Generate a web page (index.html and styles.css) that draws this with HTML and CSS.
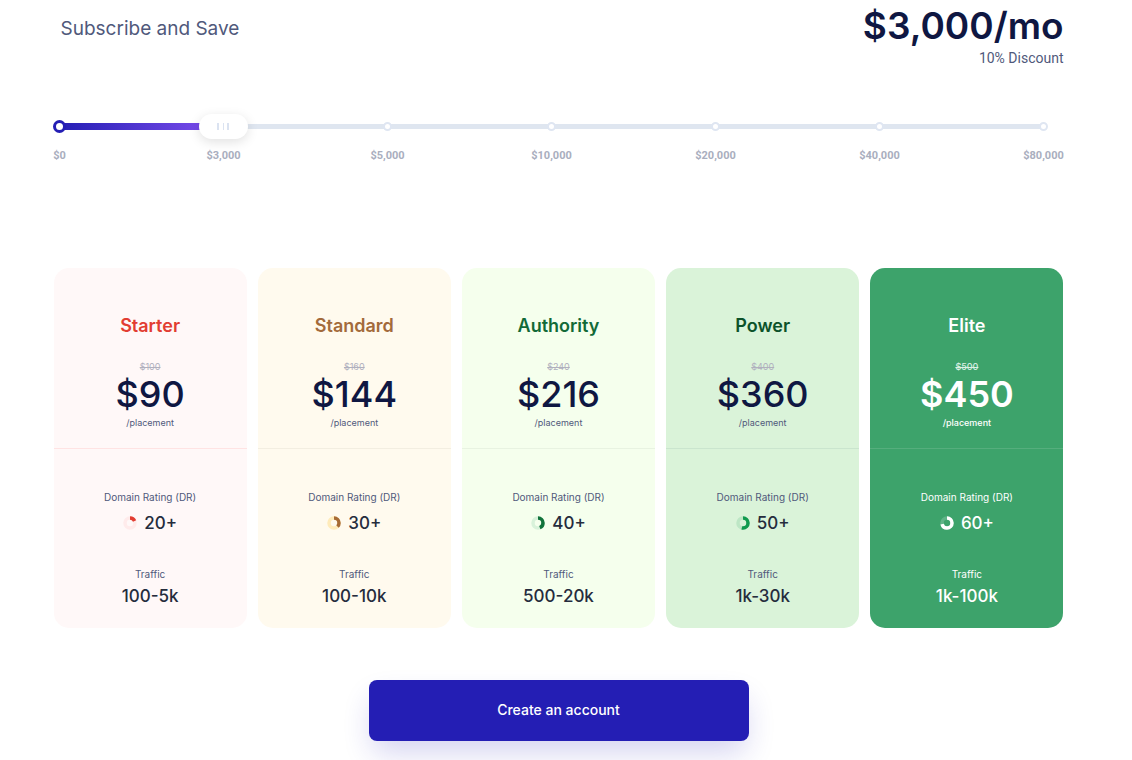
FILE: index.html
```html
<!DOCTYPE html>
<html lang="en">
<head>
<meta charset="utf-8">
<meta name="viewport" content="width=device-width, initial-scale=1">
<title>Pricing</title>
<link rel="stylesheet" href="styles.css">
</head>
<body>
<main class="page">
  <header class="summary">
    <label class="summary-title" for="budget">Subscribe and Save</label>
    <div class="summary-price">
      <output class="amount" for="budget">$3,000/mo</output>
      <span class="discount">10% Discount</span>
    </div>
  </header>

  <div class="slider">
    <div class="rail"><div class="fill"></div></div>
    <ol class="stops">
      <li class="stop stop-active"><span class="dot"></span><span class="stop-label">$0</span></li>
      <li class="stop"><span class="dot"></span><span class="stop-label">$3,000</span></li>
      <li class="stop"><span class="dot"></span><span class="stop-label">$5,000</span></li>
      <li class="stop"><span class="dot"></span><span class="stop-label">$10,000</span></li>
      <li class="stop"><span class="dot"></span><span class="stop-label">$20,000</span></li>
      <li class="stop"><span class="dot"></span><span class="stop-label">$40,000</span></li>
      <li class="stop"><span class="dot"></span><span class="stop-label">$80,000</span></li>
    </ol>
    <input class="range" id="budget" type="range" min="0" max="6" step="1" value="1">
  </div>

  <section class="plans">
    <article class="plan starter">
      <div class="plan-head">
        <h2 class="plan-name">Starter</h2>
        <s class="old-price">$100</s>
        <strong class="price">$90</strong>
        <span class="unit">/placement</span>
      </div>
      <dl class="plan-body">
        <dt class="term">Domain Rating (DR)</dt>
        <dd class="value rating"><svg class="ring" viewBox="0 0 28 28"><circle class="ring-base" cx="14" cy="14" r="10"/><circle class="ring-part" cx="14" cy="14" r="10" pathLength="100" stroke-dasharray="18 100"/></svg>20+</dd>
        <dt class="term">Traffic</dt>
        <dd class="value">100-5k</dd>
      </dl>
    </article>
    <article class="plan standard">
      <div class="plan-head">
        <h2 class="plan-name">Standard</h2>
        <s class="old-price">$160</s>
        <strong class="price">$144</strong>
        <span class="unit">/placement</span>
      </div>
      <dl class="plan-body">
        <dt class="term">Domain Rating (DR)</dt>
        <dd class="value rating"><svg class="ring" viewBox="0 0 28 28"><circle class="ring-base" cx="14" cy="14" r="10"/><circle class="ring-part" cx="14" cy="14" r="10" pathLength="100" stroke-dasharray="37 100"/></svg>30+</dd>
        <dt class="term">Traffic</dt>
        <dd class="value">100-10k</dd>
      </dl>
    </article>
    <article class="plan authority">
      <div class="plan-head">
        <h2 class="plan-name">Authority</h2>
        <s class="old-price">$240</s>
        <strong class="price">$216</strong>
        <span class="unit">/placement</span>
      </div>
      <dl class="plan-body">
        <dt class="term">Domain Rating (DR)</dt>
        <dd class="value rating"><svg class="ring" viewBox="0 0 28 28"><circle class="ring-base" cx="14" cy="14" r="10"/><circle class="ring-part" cx="14" cy="14" r="10" pathLength="100" stroke-dasharray="43 100"/></svg>40+</dd>
        <dt class="term">Traffic</dt>
        <dd class="value">500-20k</dd>
      </dl>
    </article>
    <article class="plan power">
      <div class="plan-head">
        <h2 class="plan-name">Power</h2>
        <s class="old-price">$400</s>
        <strong class="price">$360</strong>
        <span class="unit">/placement</span>
      </div>
      <dl class="plan-body">
        <dt class="term">Domain Rating (DR)</dt>
        <dd class="value rating"><svg class="ring" viewBox="0 0 28 28"><circle class="ring-base" cx="14" cy="14" r="10"/><circle class="ring-part" cx="14" cy="14" r="10" pathLength="100" stroke-dasharray="53 100"/></svg>50+</dd>
        <dt class="term">Traffic</dt>
        <dd class="value">1k-30k</dd>
      </dl>
    </article>
    <article class="plan elite">
      <div class="plan-head">
        <h2 class="plan-name">Elite</h2>
        <s class="old-price">$500</s>
        <strong class="price">$450</strong>
        <span class="unit">/placement</span>
      </div>
      <dl class="plan-body">
        <dt class="term">Domain Rating (DR)</dt>
        <dd class="value rating"><svg class="ring" viewBox="0 0 28 28"><circle class="ring-base" cx="14" cy="14" r="10"/><circle class="ring-part" cx="14" cy="14" r="10" pathLength="100" stroke-dasharray="70 100"/></svg>60+</dd>
        <dt class="term">Traffic</dt>
        <dd class="value">1k-100k</dd>
      </dl>
    </article>
  </section>

  <button class="cta" type="button">Create an account</button>
</main>
</body>
</html>
```
FILE: styles.css
```css
* { box-sizing: border-box; }

body {
  margin: 0;
  padding-right: 15px;
  background: #fff;
  color: #0f1742;
  font-family: Inter, "Liberation Sans", sans-serif;
}

.page {
  display: flex;
  flex-direction: column;
  max-width: 1010px;
  margin: 0 auto;
  padding: 4px 0 19px;
}

.summary {
  display: flex;
  justify-content: space-between;
  align-items: flex-start;
  padding-left: 7px;
}

.summary-title {
  padding-top: 13px;
  color: #50597b;
  font-size: 19px;
  line-height: 24px;
}

.summary-price {
  display: flex;
  flex-direction: column;
  align-items: flex-end;
}

.amount {
  font-size: 37px;
  font-weight: 600;
  line-height: 44px;
}

.discount {
  color: #50597b;
  font-family: Roboto, sans-serif;
  font-size: 14px;
  line-height: 20px;
}

.slider {
  display: grid;
  margin: 40px 14px 0 0;
}

.rail,
.stops,
.range { grid-area: 1 / 1; }

.rail {
  height: 5px;
  margin: 16px 6px 0;
  background: #dfe6f0;
}

.fill {
  width: 16.66%;
  height: 7px;
  margin-top: -1px;
  background: linear-gradient(90deg, #241eb4, #8150f0);
}

.stops {
  display: flex;
  justify-content: space-between;
  margin: 0;
  padding: 12px 0 0;
  list-style: none;
}

.stop {
  display: flex;
  flex-direction: column;
  align-items: center;
  gap: 16px;
  width: 12px;
}

.dot {
  width: 9px;
  height: 9px;
  margin: 2px 0;
  border: 2px solid #dfe6f2;
  border-radius: 50%;
  background: #fff;
}

.stop-active .dot {
  width: 13px;
  height: 13px;
  margin: 0;
  border: 3px solid #241eb4;
}

.stop-label {
  color: #a9aebe;
  font-family: Roboto, sans-serif;
  font-size: 11px;
  font-weight: 700;
  line-height: 13px;
  white-space: nowrap;
}

.range {
  appearance: none;
  height: 37px;
  margin: 0 -19px;
  background: transparent;
}

.range::-webkit-slider-thumb {
  appearance: none;
  width: 49px;
  height: 25px;
  border: 0;
  border-radius: 13px;
  background:
    linear-gradient(#dbe3f1, #dbe3f1) 18px 9px / 2px 7px no-repeat,
    linear-gradient(#dbe3f1, #dbe3f1) 24px 9px / 1px 7px no-repeat,
    linear-gradient(#dbe3f1, #dbe3f1) 28px 9px / 2px 7px no-repeat,
    #fff;
  box-shadow: 0 3px 12px rgba(0, 0, 0, 0.12);
}

.plans {
  display: grid;
  grid-template-columns: repeat(5, 1fr);
  gap: 11px;
  margin-top: 106px;
}

.plan {
  border-radius: 15px;
  background: var(--back);
  text-align: center;
}

.plan-head {
  display: flex;
  flex-direction: column;
  align-items: center;
  padding: 46px 8px 18px;
  border-bottom: 1px solid var(--line);
}

.plan-name {
  margin: 0 0 22px;
  color: var(--name);
  font-size: 18px;
  font-weight: 600;
  line-height: 24px;
}

.old-price {
  color: #b0b0be;
  font-size: 9px;
  line-height: 13px;
}

.price {
  font-size: 36px;
  font-weight: 500;
  line-height: 43px;
}

.unit {
  color: #50597b;
  font-size: 9px;
  line-height: 14px;
}

.plan-body {
  margin: 0;
  padding: 40px 8px 20px;
}

.term {
  color: #50597b;
  font-size: 10px;
  line-height: 16px;
}

.value {
  margin: 0;
  padding-top: 2px;
  color: #252c3d;
  font-size: 17px;
  font-weight: 500;
  line-height: 24px;
}

.rating {
  display: flex;
  justify-content: center;
  align-items: center;
  gap: 7px;
  padding: 6px 0 31px;
}

.ring {
  width: 14px;
  height: 14px;
  fill: none;
  stroke-width: 7;
}

.ring-base { stroke: var(--ring); }

.ring-part {
  stroke: var(--part);
  transform: rotate(-90deg);
  transform-origin: center;
}

.starter { --back: #fff8f8; --line: #ffe3e3; --name: #e23d32; --ring: #ffebeb; --part: #e23d32; }
.standard { --back: #fffaee; --line: #f3eee1; --name: #a36a3b; --ring: #ffebba; --part: #a76b35; }
.authority { --back: #f5ffed; --line: #e8f3e1; --name: #126a37; --ring: #d8f2da; --part: #11733b; }
.power { --back: #daf3d9; --line: #cae5ce; --name: #0c522a; --ring: #bde6c5; --part: #109a4e; }
.elite { --back: #3da36b; --line: #55ae7d; --name: #fff; --ring: #60b487; --part: #fff; }

.elite .old-price { color: #daf0e3; }
.elite .price { font-weight: 600; }
.elite .price,
.elite .unit,
.elite .term,
.elite .value { color: #fff; }
.elite .unit,
.elite .old-price { font-weight: 500; }

.cta {
  align-self: center;
  width: 100%;
  max-width: 380px;
  margin-top: 52px;
  padding: 18px 16px 19px;
  border: 0;
  border-radius: 8px;
  background: #241eb4;
  box-shadow: 0 15px 30px -4px rgba(36, 30, 180, 0.2);
  color: #fff;
  font-family: inherit;
  font-size: 14px;
  font-weight: 500;
  line-height: 24px;
}
```
